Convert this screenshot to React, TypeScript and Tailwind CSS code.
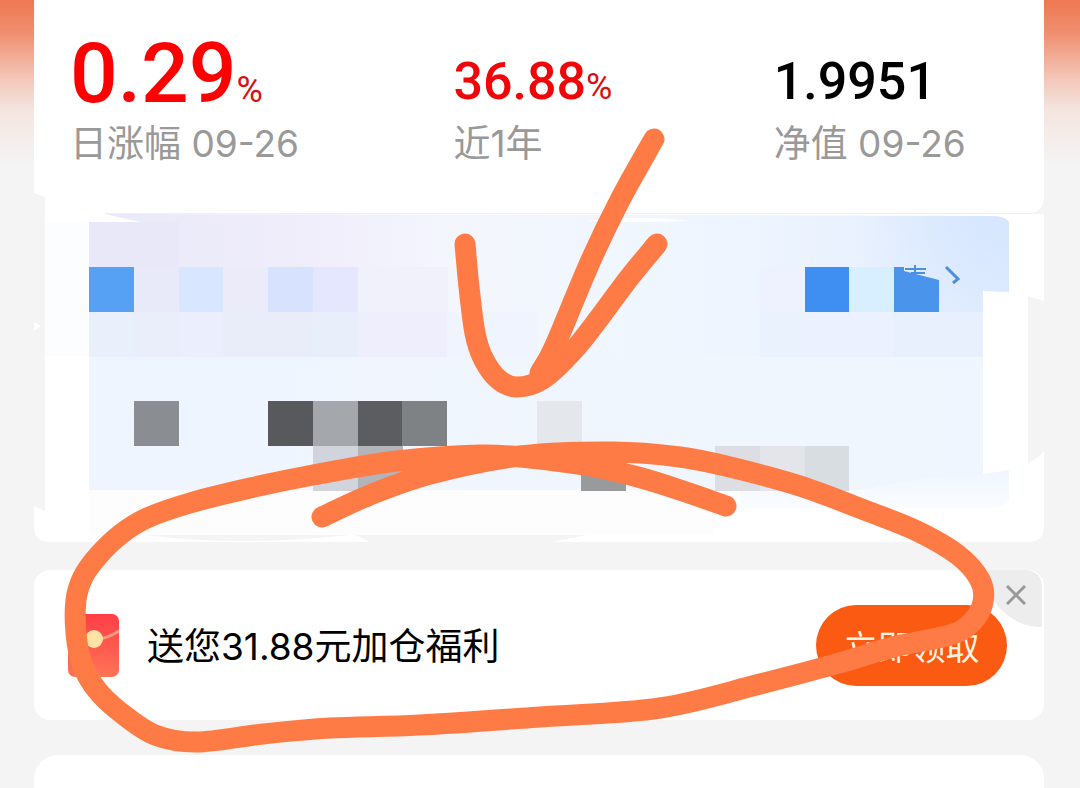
import type { ReactNode } from 'react'

type Point = [number, number]
type Cell = { x: number; y: number; w?: number; h?: number; fill: string }

const CELL = 45

// pale tiles first, the strongly coloured ones after them
const cells: Cell[] = [
  { x: 89, y: 222, w: 90, fill: '#e9e8f8' },
  { x: 179, y: 222, fill: '#ebebfa' },
  { x: 134, y: 267, fill: '#e8eaf9' },
  { x: 179, y: 267, fill: '#d8e7ff' },
  { x: 223, y: 267, fill: '#ecebf9' },
  { x: 268, y: 267, fill: '#d6e2fe' },
  { x: 313, y: 267, fill: '#e4e7fd' },
  { x: 358, y: 267, w: 90, fill: '#f1f1fb' },
  { x: 89, y: 312, fill: '#eaeffc' },
  { x: 134, y: 312, fill: '#eaedfa' },
  { x: 179, y: 312, fill: '#eaeefd' },
  { x: 223, y: 312, w: 90, fill: '#e9edfa' },
  { x: 313, y: 312, fill: '#e8effa' },
  { x: 358, y: 312, w: 90, fill: '#efeefc' },
  { x: 447, y: 312, w: 90, fill: '#f0f4fe' },
  { x: 760, y: 267, fill: '#eef2fe' },
  { x: 760, y: 312, fill: '#eaf2fe' },
  { x: 805, y: 312, w: 90, fill: '#ebf1fe' },
  { x: 894, y: 312, w: 89, fill: '#e8f0fe' },
  { x: 89, y: 267, fill: '#56a1f3' },
  { x: 805, y: 267, fill: '#3f8ff2' },
  { x: 849, y: 267, fill: '#d8efff' },
  { x: 134, y: 401, fill: '#8a8d91' },
  { x: 268, y: 401, fill: '#58595d' },
  { x: 313, y: 401, fill: '#a4a7ac' },
  { x: 358, y: 401, fill: '#5c5d60' },
  { x: 402, y: 401, fill: '#7e8284' },
  { x: 537, y: 401, fill: '#e4e8ec' },
  { x: 313, y: 446, fill: '#d1d4dc' },
  { x: 358, y: 446, fill: '#b2b4b9' },
  { x: 581, y: 446, fill: '#989a9b' },
  { x: 715, y: 446, fill: '#dddee3' },
  { x: 760, y: 446, fill: '#e4e5ea' },
  { x: 805, y: 446, w: 44, fill: '#d8dde1' },
]

const loop: Point[] = [
  [322, 517], [370, 495], [430, 474], [520, 456], [613, 452], [680, 457], [730, 467],
  [800, 486], [867, 511], [917, 531], [958, 555], [980, 580], [983, 602], [972, 622],
  [950, 635], [893, 647], [843, 662], [760, 684], [660, 708], [540, 717], [420, 725],
  [330, 728], [263, 734], [197, 742], [155, 735], [120, 712], [97, 690], [82, 664],
  [76, 633], [76, 600], [83, 577], [98, 556], [121, 534], [147, 518], [190, 503],
  [250, 488], [313, 475], [397, 461], [480, 455], [530, 458], [590, 466], [638, 477],
  [680, 490], [726, 506],
]
const arrowHead: Point[] = [
  [465, 244], [469, 287], [475, 333], [483, 358], [498, 379], [517, 387], [543, 379],
  [573, 351], [600, 317], [629, 278], [657, 244],
]
const arrowStem: Point[] = [[654, 139], [620, 200], [591, 260], [560, 334], [550, 356], [540, 373]]

function smooth(points: Point[]) {
  let d = `M${points[0][0]} ${points[0][1]}`
  for (let i = 0; i < points.length - 1; i++) {
    const a = points[i - 1] ?? points[i]
    const b = points[i]
    const c = points[i + 1]
    const e = points[i + 2] ?? c
    d += ` C${b[0] + (c[0] - a[0]) / 6} ${b[1] + (c[1] - a[1]) / 6} ${c[0] - (e[0] - b[0]) / 6} ${c[1] - (e[1] - b[1]) / 6} ${c[0]} ${c[1]}`
  }
  return d
}

function Stat({ label, children }: { label: string; children: ReactNode }) {
  return (
    <div className="flex flex-col justify-end whitespace-nowrap">
      {children}
      <div className="text-[37px] leading-[44px] text-[#999999]">{label}</div>
    </div>
  )
}

function Stats() {
  return (
    <section className="grid grid-cols-[383fr_320fr_270fr] bg-white pt-[26px] pb-6 pl-9">
      <Stat label="日涨幅 09-26">
        <div className="font-[Roboto,sans-serif] text-[84px] leading-[96px] font-medium text-[#ff0000]">
          0.29
          <span className="text-[36px] leading-none font-normal text-[#d90f12]">%</span>
        </div>
      </Stat>
      <Stat label="近1年">
        <div className="font-[Roboto,sans-serif] text-[52px] leading-[80px] font-medium text-[#f00508]">
          36.88
          <span className="text-[36px] leading-none font-normal text-[#d90f12]">%</span>
        </div>
      </Stat>
      <Stat label="净值 09-26">
        <div className="font-[Roboto,sans-serif] text-[52px] leading-[80px] font-medium text-black">1.9951</div>
      </Stat>
    </section>
  )
}

function Mosaic() {
  return (
    <svg viewBox="34 190 1010 352" className="block w-full" aria-hidden="true">
      <defs>
        <linearGradient id="wash" x1="0" x2="1" y1="0" y2="0">
          <stop offset="0" stopColor="#e9e8f8" />
          <stop offset="0.25" stopColor="#f0eefb" />
          <stop offset="0.4" stopColor="#f4f6fd" />
          <stop offset="0.65" stopColor="#eff6ff" />
          <stop offset="0.85" stopColor="#e9f1fe" />
          <stop offset="1" stopColor="#e2edfe" />
        </linearGradient>
        <radialGradient id="corner" gradientUnits="userSpaceOnUse" cx="1000" cy="215" r="150">
          <stop offset="0" stopColor="#d5e6fe" />
          <stop offset="1" stopColor="#d5e6fe" stopOpacity="0" />
        </radialGradient>
        <linearGradient id="lower" x1="0" x2="1" y1="0" y2="0">
          <stop offset="0" stopColor="#eef5fe" />
          <stop offset="0.45" stopColor="#f1f6fe" />
          <stop offset="1" stopColor="#eff6ff" />
        </linearGradient>
        <linearGradient id="fade" x1="0" x2="0" y1="0" y2="1">
          <stop offset="0" stopColor="#f0f6ff" />
          <stop offset="1" stopColor="#fafdff" />
        </linearGradient>
      </defs>
      <path d="M34 190H1044V196Q1044 213 1028 213H45V197L34 193Z" fill="#fff" />
      <path d="M45 213H1028V214H1044V301L1028 296V463Q1037 459 1044 451V526Q1044 542 1028 542H50Q34 542 34 526V506L45 511Z" fill="#fff" />
      <path d="M34 322L41 326L34 331Z" fill="#fff" />
      <rect x="105" y="213" width="923" height="1" fill="#f0f0f2" />
      <rect x="45" y="222" width="44" height="134" fill="#fcfdff" />
      <path d="M105 214L140 222H89V356H983V291L1009 292V222Q1005 216 992 216L690 215Z" fill="url(#wash)" />
      <path d="M800 216H992Q1005 216 1009 222V292L983 291V340H800Z" fill="url(#corner)" />
      <rect x="89" y="356" width="894" height="134" fill="url(#lower)" />
      <rect x="89" y="490" width="626" height="45" fill="#fdfdfd" />
      <path d="M860 492Q900 478 983 474L1009 470V500Q1004 508 992 508H740V490Z" fill="url(#fade)" />
      <path d="M584 221Q640 215 690 221Q640 223 584 221Z" fill="#fff" />
      {cells.map((c) => (
        <rect key={`${c.x}-${c.y}`} x={c.x} y={c.y} width={c.w ?? CELL} height={c.h ?? CELL} fill={c.fill} />
      ))}
      <path d="M894 267H904V271L939 280V312H894Z" fill="#4b94eb" />
      <path d="M905 269H926M915 265V274M911 273H925" stroke="#4b8fe2" strokeWidth="2" fill="none" />
      <path d="M946 267L958 279L953 283" stroke="#4b8fe2" strokeWidth="3" fill="none" />
      <path d="M145 535Q240 547 350 535ZM356 535H586L553 542H370Z" fill="#f4f4f4" />
    </svg>
  )
}

function RedPacket() {
  return (
    <svg viewBox="0 0 51 63" className="h-[63px] w-[51px] shrink-0" aria-hidden="true">
      <defs>
        <linearGradient id="packet" x1="0" x2="0" y1="0" y2="1">
          <stop offset="0" stopColor="#ff3d46" />
          <stop offset="1" stopColor="#ff7458" />
        </linearGradient>
      </defs>
      <rect width="51" height="63" rx="7" fill="url(#packet)" />
      <path d="M0 17Q25 34 51 17" stroke="#ff9a7c" strokeWidth="3" fill="none" />
      <circle cx="26" cy="25" r="9" fill="#ffe2a5" />
    </svg>
  )
}

function Promo() {
  return (
    <section className="relative mt-7 flex h-[150px] items-center overflow-hidden rounded-2xl bg-white pr-[37px] pl-[34px]">
      <RedPacket />
      <p className="ml-7 flex-1 pt-1 text-[37px] whitespace-nowrap text-black">送您31.88元加仓福利</p>
      <button
        type="button"
        className="h-[81px] w-[191px] rounded-full bg-[#fb5a13] pt-1 text-[34px] whitespace-nowrap text-[#fff5e2]"
      >
        立即领取
      </button>
      <button
        type="button"
        aria-label="关闭"
        className="absolute top-0 right-[2px] flex h-[57px] w-[57px] items-center justify-center rounded-tr-2xl rounded-bl-[57px] bg-[#ededed] pb-2 pl-1"
      >
        <svg viewBox="0 0 20 20" className="size-5" aria-hidden="true">
          <path d="M1 1L19 19M19 1L1 19" stroke="#999999" strokeWidth="3" />
        </svg>
      </button>
    </section>
  )
}

export default function App() {
  return (
    <div className="relative min-h-screen overflow-hidden bg-[#f4f4f4] font-[Inter,'Noto_Sans_CJK_SC',sans-serif]">
      <div className="flex min-h-screen flex-col bg-[linear-gradient(#ee7852_0px,#f09072_35px,#f3c3b3_75px,#f4e5e0_110px,#f4f4f4_165px)] pr-9 pl-[34px]">
        <Stats />
        <Mosaic />
        <Promo />
        <section className="mt-[35px] min-h-[33px] flex-1 rounded-t-3xl bg-white" />
      </div>
      <svg
        viewBox="0 0 1080 788"
        className="pointer-events-none absolute top-0 left-0 w-full"
        fill="none"
        stroke="#ff7b45"
        strokeWidth="21"
        strokeLinecap="round"
        strokeLinejoin="round"
        aria-hidden="true"
      >
        <path d={smooth(loop)} />
        <path d={smooth(arrowHead)} />
        <path d={smooth(arrowStem)} />
      </svg>
    </div>
  )
}
